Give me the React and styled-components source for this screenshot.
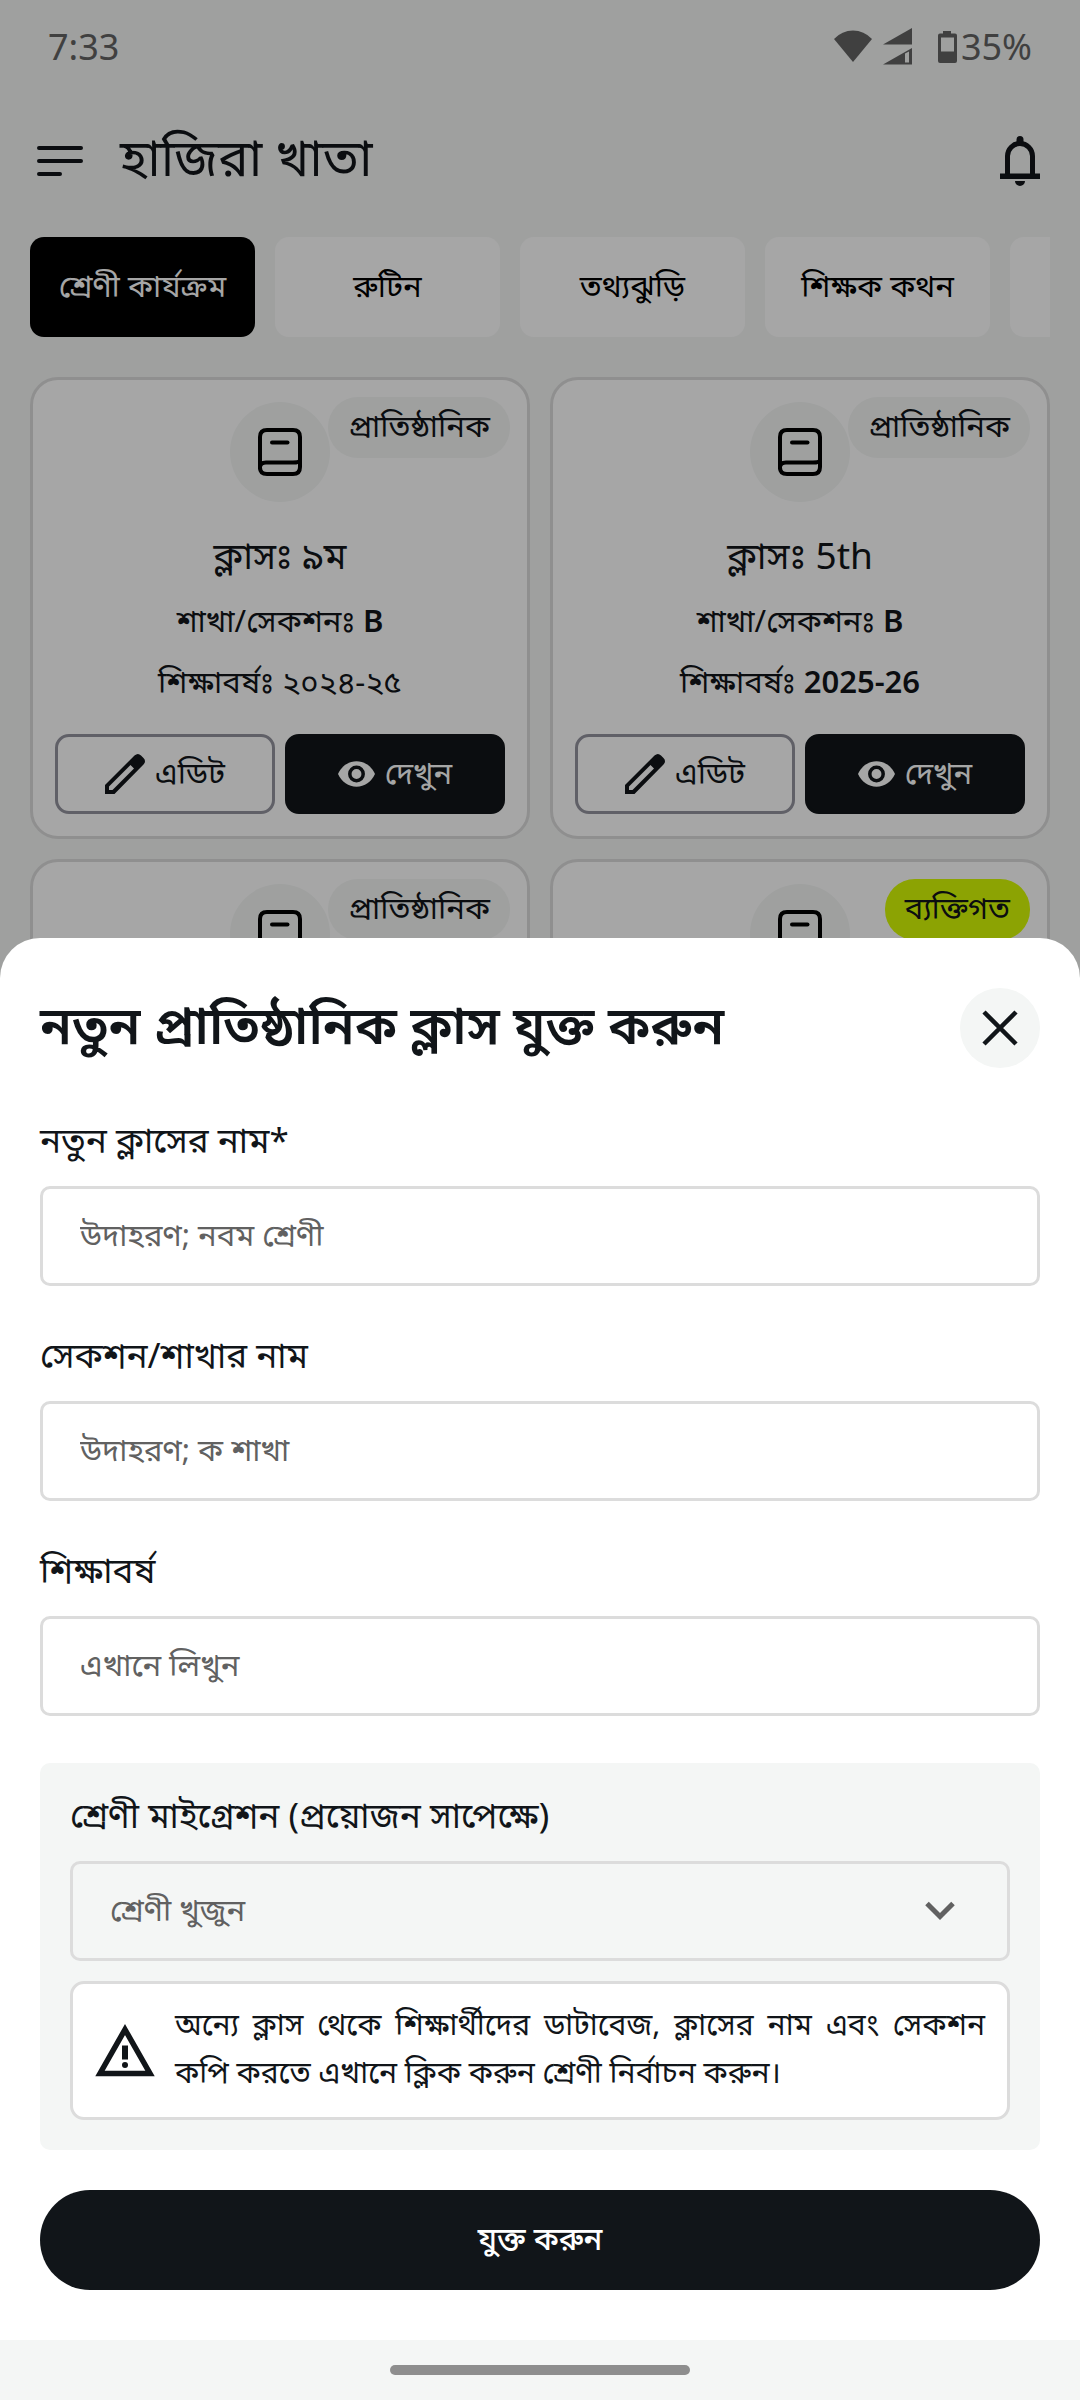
import React from "react";
import styled, { createGlobalStyle } from "styled-components";

const color = {
  ink: "#111519",
  page: "#f4f6f5",
  white: "#ffffff",
  line: "#dcdcdc",
  muted: "#616161",
  lime: "#d7fb06",
};

const GlobalStyle = createGlobalStyle`
  *, *::before, *::after { box-sizing: border-box; }
  body {
    margin: 0;
    color: ${color.ink};
    background: ${color.page};
    font-family: "Noto Sans", "Noto Sans Bengali", sans-serif;
    font-size: 31px;
    line-height: 48px;
  }
  h1, h2, h3, p { margin: 0; font-weight: 400; }
  button, input, select { font: inherit; color: inherit; margin: 0; }
  button { cursor: pointer; padding: 0; border: 0; background: none; }
  svg { display: block; flex: none; }
`;

const Screen = styled.div`
  display: flex;
  flex-direction: column;
  height: 100vh;
  overflow: hidden;
`;

const Backdrop = styled.div`
  position: relative;
  flex: 1;
  min-height: 0;
  overflow: hidden;
`;

const StatusBar = styled.div`
  display: flex;
  align-items: center;
  justify-content: space-between;
  height: 94px;
  padding: 0 48px;
  font-size: 36px;
  color: #636363;
`;

const StatusIcons = styled.div`
  display: flex;
  align-items: center;
`;

const Header = styled.header`
  display: flex;
  align-items: center;
  height: 134px;
  padding: 0 40px 0 37px;
`;

const IconButton = styled.button`
  display: flex;
`;

const AppTitle = styled.h1`
  flex: 1;
  padding: 0 0 10px 36px;
  font-size: 51px;
  line-height: 72px;
`;

const Main = styled.main`
  display: flex;
  flex-direction: column;
  gap: 40px;
  padding: 9px 30px 0;
`;

const Tabs = styled.nav`
  display: flex;
  gap: 20px;
  overflow: hidden;
`;

const Tab = styled.button`
  flex: none;
  width: 225px;
  height: 100px;
  padding-bottom: 4px;
  border-radius: 14px;
  color: ${(p) => (p.$active ? color.white : "#000000")};
  background: ${(p) => (p.$active ? "#000000" : color.white)};
`;

const Cards = styled.div`
  display: grid;
  grid-template-columns: 1fr 1fr;
  gap: 20px;
`;

const Card = styled.article`
  position: relative;
  display: flex;
  flex-direction: column;
  align-items: center;
  min-height: 462px;
  padding: 22px;
  border: 3px solid ${color.line};
  border-radius: 28px;
  background: ${color.white};
`;

const Badge = styled.span`
  position: absolute;
  top: 17px;
  right: 17px;
  padding: 4px 20px 9px;
  border-radius: 30px;
  background: ${(p) => (p.$personal ? color.lime : color.page)};
`;

const BookCircle = styled.div`
  display: flex;
  align-items: center;
  justify-content: center;
  width: 100px;
  height: 100px;
  margin-bottom: 22px;
  border-radius: 50%;
  background: ${color.page};
`;

const ClassName = styled.h2`
  margin-bottom: 4px;
  font-size: 37px;
  line-height: 62px;
`;

const ClassLine = styled.p`
  line-height: 61px;
`;

const Value = styled.strong`
  font-weight: 600;
`;

const CardActions = styled.div`
  display: flex;
  align-self: stretch;
  gap: 10px;
  margin-top: 22px;
`;

const CardButton = styled.button`
  flex: 1;
  display: flex;
  align-items: center;
  justify-content: center;
  gap: 10px;
  height: 80px;
  border: 3px solid ${(p) => (p.$dark ? color.ink : "#94949f")};
  border-radius: 14px;
  color: ${(p) => (p.$dark ? color.white : color.ink)};
  background: ${(p) => (p.$dark ? color.ink : color.white)};
`;

const CardButtonText = styled.span`
  padding-bottom: 4px;
`;

const Scrim = styled.div`
  position: absolute;
  inset: 0;
  background: rgba(0, 0, 0, 0.35);
`;

const Sheet = styled.form`
  position: relative;
  margin-top: -40px;
  padding: 50px 40px;
  border-radius: 40px 40px 0 0;
  background: ${color.white};
`;

const SheetHead = styled.div`
  display: flex;
  align-items: center;
  justify-content: space-between;
  margin-bottom: 48px;
`;

const SheetTitle = styled.h2`
  padding-bottom: 8px;
  font-size: 52px;
  font-weight: 600;
  line-height: 72px;
`;

const CloseButton = styled.button`
  display: flex;
  align-items: center;
  justify-content: center;
  width: 80px;
  height: 80px;
  border-radius: 50%;
  background: ${color.page};
`;

const Fields = styled.div`
  display: flex;
  flex-direction: column;
  gap: 45px;
`;

const Field = styled.div`
  display: flex;
  flex-direction: column;
  gap: 20px;
`;

const Label = styled.label`
  padding-bottom: 2px;
  font-size: 35px;
  line-height: 48px;
`;

const Input = styled.input`
  width: 100%;
  height: 100px;
  padding: 0 37px 4px;
  border: 3px solid ${color.line};
  border-radius: 10px;
  outline: none;
  background: ${color.white};
  &::placeholder { color: ${color.muted}; opacity: 1; }
`;

const MigrationPanel = styled(Field)`
  margin-top: 2px;
  padding: 28px 30px 30px;
  border-radius: 10px;
  background: ${color.page};
`;

const SelectBox = styled.div`
  display: grid;
  align-items: center;
  & > * { grid-area: 1 / 1; }
  & > svg { justify-self: end; margin-right: 55px; pointer-events: none; }
`;

const Select = styled.select`
  width: 100%;
  height: 100px;
  padding: 0 37px 4px;
  border: 3px solid ${color.line};
  border-radius: 10px;
  appearance: none;
  color: ${color.muted};
  background: transparent;
`;

const Notice = styled.div`
  display: flex;
  align-items: center;
  gap: 20px;
  padding: 16px 22px 17px;
  border: 3px solid ${color.line};
  border-radius: 14px;
  background: ${color.white};
`;

const NoticeText = styled.p`
  flex: 1;
  padding-bottom: 4px;
  font-size: 30px;
  text-align: justify;
`;

const Submit = styled.button`
  width: 100%;
  height: 100px;
  margin-top: 40px;
  padding-bottom: 4px;
  border-radius: 50px;
  font-weight: 500;
  color: ${color.white};
  background: ${color.ink};
`;

const NavBar = styled.div`
  display: flex;
  align-items: center;
  justify-content: center;
  height: 60px;
  background: ${color.page};
`;

const NavHandle = styled.div`
  width: 300px;
  height: 10px;
  border-radius: 5px;
  background: #8e8e8e;
`;

const StatusGlyphs = () => (
  <svg width="127" height="40" viewBox="0 0 127 40" fill="currentColor" aria-hidden="true">
    <path d="M0 12Q8 3.5 19 3.5T38 12L19 35Z" />
    <path d="M49 17.500 78 1v16.500Z" />
    <path fillRule="evenodd" d="M49 37.500 78 21v16.500ZM71 26.500v9h4V24.500Z" />
    <path fillRule="evenodd" d="M109 4h8v2.500h4q2 0 2 2V34q0 2-2 2h-15q-2 0-2-2V8.500q0-2 2-2h3ZM107 10.500v14h13v-14Z" />
  </svg>
);

const MenuIcon = () => (
  <svg width="47" height="32" viewBox="0 0 47 32" stroke="currentColor" strokeWidth="4" strokeLinecap="round" aria-hidden="true">
    <path d="M2 3h42M2 16h42M2 29h21" />
  </svg>
);

const BellIcon = () => (
  <svg width="40" height="50" viewBox="0 0 40 50" aria-hidden="true">
    <path d="M7.500 40V20a12.500 12.500 0 0 1 25 0V40" fill="none" stroke="currentColor" strokeWidth="5" />
    <path d="M0 37.500h40v5.500H0ZM15 45h10a5 5 0 0 1-10 0ZM16.500 8V3.500a3.500 3.500 0 0 1 7 0V8Z" fill="currentColor" />
  </svg>
);

const BookIcon = () => (
  <svg width="44" height="48" viewBox="0 0 44 48" fill="none" stroke="#000000" strokeWidth="4" strokeLinecap="round" aria-hidden="true">
    <path d="M2 41V9q0-7 7-7h26q7 0 7 7v30q0 7-7 7H9q-7 0-7-6.500Q2 34.500 8 34.500h27q6 0 7-2" />
    <path d="M14 14.500h15.500" />
  </svg>
);

const PencilIcon = () => (
  <svg width="40" height="40" viewBox="0 0 40 40" fill="currentColor" aria-hidden="true">
    <path fillRule="evenodd" d="M0 40V31L29.500 1.500Q33 -1.500 36 1.500L38.500 4Q41.500 7 38.500 10.500L9.500 40ZM4 36H7.500L29 14.500 25.500 11 4 32.500Z" />
  </svg>
);

const EyeIcon = () => (
  <svg width="37" height="26" viewBox="0 0 37 26" aria-hidden="true">
    <path d="M0 13C3.500 5 10.500 .3 18.500 .3S33.500 5 37 13C33.500 21 26.500 25.700 18.500 25.700S3.500 21 0 13Z" fill="currentColor" />
    <circle cx="18.500" cy="13" r="6.700" fill="none" stroke={color.ink} strokeWidth="3.500" />
  </svg>
);

const CloseIcon = () => (
  <svg width="36" height="36" viewBox="0 0 36 36" stroke="currentColor" strokeWidth="4.500" aria-hidden="true">
    <path d="M2 2l32 32M34 2 2 34" />
  </svg>
);

const ChevronIcon = () => (
  <svg width="30" height="20" viewBox="0 0 30 20" fill="none" stroke={color.muted} strokeWidth="5" aria-hidden="true">
    <path d="M2 2.500l13 13 13-13" />
  </svg>
);

const WarningIcon = () => (
  <svg width="60" height="54" viewBox="0 0 60 54" aria-hidden="true">
    <path d="M30 6.500 55 50.500H5Z" fill="none" stroke="currentColor" strokeWidth="5.500" />
    <path d="M27 22.500h6v14h-6Z" fill="currentColor" />
    <circle cx="30" cy="42" r="3" fill="currentColor" />
  </svg>
);

const tabs = ["শ্রেণী কার্যক্রম", "রুটিন", "তথ্যঝুড়ি", "শিক্ষক কথন"];

const classes = [
  { id: 1, name: "৯ম", section: "B", year: "২০২৪-২৫" },
  { id: 2, name: "5th", section: "B", year: "2025-26" },
  { id: 3 },
  { id: 4, personal: true },
];

const fields = [
  { id: "class-name", label: "নতুন ক্লাসের নাম*", placeholder: "উদাহরণ; নবম শ্রেণী" },
  { id: "section-name", label: "সেকশন/শাখার নাম", placeholder: "উদাহরণ; ক শাখা" },
  { id: "school-year", label: "শিক্ষাবর্ষ", placeholder: "এখানে লিখুন" },
];

const ClassCard = ({ name, section, year, personal }) => (
  <Card>
    <Badge $personal={personal}>{personal ? "ব্যক্তিগত" : "প্রাতিষ্ঠানিক"}</Badge>
    <BookCircle><BookIcon /></BookCircle>
    {name && (
      <>
        <ClassName>ক্লাসঃ {name}</ClassName>
        <ClassLine>শাখা/সেকশনঃ <Value>{section}</Value></ClassLine>
        <ClassLine>শিক্ষাবর্ষঃ {/^\d/.test(year) ? <Value>{year}</Value> : year}</ClassLine>
        <CardActions>
          <CardButton type="button"><PencilIcon /><CardButtonText>এডিট</CardButtonText></CardButton>
          <CardButton type="button" $dark><EyeIcon /><CardButtonText>দেখুন</CardButtonText></CardButton>
        </CardActions>
      </>
    )}
  </Card>
);

export default function App() {
  return (
    <Screen>
      <GlobalStyle />
      <Backdrop>
        <StatusBar>
          <span>7:33</span>
          <StatusIcons><StatusGlyphs />35%</StatusIcons>
        </StatusBar>
        <Header>
          <IconButton type="button" aria-label="মেনু"><MenuIcon /></IconButton>
          <AppTitle>হাজিরা খাতা</AppTitle>
          <IconButton type="button" aria-label="বিজ্ঞপ্তি"><BellIcon /></IconButton>
        </Header>
        <Main>
          <Tabs>
            {tabs.map((tab, i) => (
              <Tab key={tab} type="button" $active={i === 0}>{tab}</Tab>
            ))}
            <Tab type="button" aria-label="আরও" />
          </Tabs>
          <Cards>
            {classes.map((item) => <ClassCard key={item.id} {...item} />)}
          </Cards>
        </Main>
        <Scrim />
      </Backdrop>
      <Sheet role="dialog" aria-labelledby="sheet-title" onSubmit={(e) => e.preventDefault()}>
        <SheetHead>
          <SheetTitle id="sheet-title">নতুন প্রাতিষ্ঠানিক ক্লাস যুক্ত করুন</SheetTitle>
          <CloseButton type="button" aria-label="বন্ধ করুন"><CloseIcon /></CloseButton>
        </SheetHead>
        <Fields>
          {fields.map((field) => (
            <Field key={field.id}>
              <Label htmlFor={field.id}>{field.label}</Label>
              <Input id={field.id} type="text" placeholder={field.placeholder} />
            </Field>
          ))}
          <MigrationPanel>
            <Label htmlFor="migration">শ্রেণী মাইগ্রেশন (প্রয়োজন সাপেক্ষে)</Label>
            <SelectBox>
              <Select id="migration" defaultValue="">
                <option value="">শ্রেণী খুজুন</option>
              </Select>
              <ChevronIcon />
            </SelectBox>
            <Notice>
              <WarningIcon />
              <NoticeText>
                অন্যে ক্লাস থেকে শিক্ষার্থীদের ডাটাবেজ, ক্লাসের নাম এবং সেকশন কপি করতে এখানে ক্লিক করুন শ্রেণী নির্বাচন করুন।
              </NoticeText>
            </Notice>
          </MigrationPanel>
        </Fields>
        <Submit type="submit">যুক্ত করুন</Submit>
      </Sheet>
      <NavBar><NavHandle /></NavBar>
    </Screen>
  );
}
